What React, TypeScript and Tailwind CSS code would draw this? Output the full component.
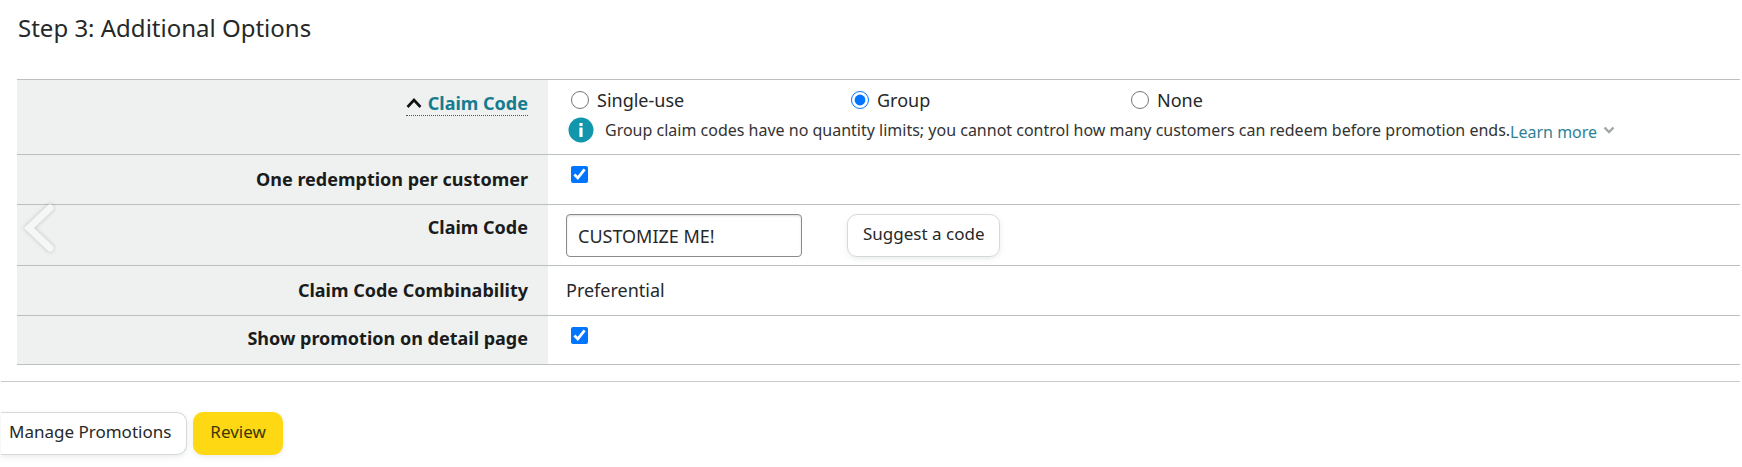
import { useState, type ReactNode } from 'react'

const claimTypes = ['Single-use', 'Group', 'None']

type RowProps = {
  label: ReactNode
  labelClass?: string
  children: ReactNode
  className?: string
}

const Row = ({ label, labelClass = 'pt-2.5', children, className = '' }: RowProps) => (
  <tr className="border-y border-[#bbbfbf]">
    <th
      scope="row"
      className={`w-[531px] bg-[#eff1f1] pr-5 text-right align-top text-lg leading-6 font-bold text-[#1a1c1c] ${labelClass}`}
    >
      {label}
    </th>
    <td className={`pl-[18px] align-top ${className}`}>{children}</td>
  </tr>
)

const Checkbox = ({ id }: { id: string }) => (
  <input
    id={id}
    type="checkbox"
    defaultChecked
    className="ml-[5px] block h-[17px] w-[17px] accent-[#0075ff]"
  />
)

const InfoIcon = () => (
  <svg viewBox="0 0 26 26" className="h-[26px] w-[26px] shrink-0" aria-hidden="true">
    <circle cx="13" cy="13" r="12.5" fill="#1196ab" />
    <rect x="11.4" y="6" width="3.2" height="3" fill="#fff" />
    <rect x="11.4" y="10.5" width="3.2" height="9.5" fill="#fff" />
  </svg>
)

export default function App() {
  const [claimType, setClaimType] = useState('Group')
  const [code, setCode] = useState('CUSTOMIZE ME!')

  return (
    <main className="bg-white pr-0.5 font-['Noto_Sans',sans-serif] text-lg text-[#262829]">
      <h1 className="pt-3 pl-[18px] text-2xl leading-8">Step 3: Additional Options</h1>

      <div className="relative mt-[35px] pl-[17px]">
        <table className="w-full border-collapse">
          <tbody>
            <Row
              className="h-[75px] pt-2"
              label={
                <a
                  href="#claim-code"
                  className="inline-flex items-center gap-1.5 border-b border-dotted border-[#565959] text-[#157c8f]"
                >
                  <svg viewBox="0 0 16 12" className="h-3 w-4" aria-hidden="true">
                    <path d="M1.5 10 8 3l6.5 7" fill="none" stroke="#0f1111" strokeWidth="2.6" />
                  </svg>
                  Claim Code
                </a>
              }
            >
              <div className="flex leading-6">
                {claimTypes.map((type) => (
                  <label key={type} className="flex w-[280px] items-center gap-2 pl-[5px]">
                    <input
                      type="radio"
                      name="claim-type"
                      className="h-[18px] w-[18px] accent-[#0075ff]"
                      checked={claimType === type}
                      onChange={() => setClaimType(type)}
                    />
                    {type}
                  </label>
                ))}
              </div>
              <div className="mt-1 flex items-center pl-0.5 text-base leading-6 whitespace-nowrap">
                <InfoIcon />
                <span className="ml-[11px] text-[#333]">
                  Group claim codes have no quantity limits; you cannot control how many customers can
                  redeem before promotion ends.
                </span>
                <a href="#learn-more" className="flex items-center gap-1.5 pt-1 text-[#2f8294]">
                  Learn more
                  <svg viewBox="0 0 12 8" className="mb-1 h-2 w-3" aria-hidden="true">
                    <path d="M1.5 1.5 6 6l4.5-4.5" fill="none" stroke="#a2a6a6" strokeWidth="2.4" />
                  </svg>
                </a>
              </div>
            </Row>
            <Row
              labelClass="pt-3"
              className="h-[50px] pt-[11px]"
              label={<label htmlFor="one-redemption">One redemption per customer</label>}
            >
              <Checkbox id="one-redemption" />
            </Row>
            <Row className="h-[61px] pt-[9px]" label={<label htmlFor="code">Claim Code</label>}>
              <div className="flex gap-[45px]">
                <input
                  id="code"
                  className="h-[43px] w-[236px] rounded border border-[#888c8c] px-[11px] shadow-[inset_0_1px_2px_rgba(15,17,17,0.15)] outline-none"
                  value={code}
                  onChange={(event) => setCode(event.target.value)}
                />
                <button
                  type="button"
                  className="h-[43px] rounded-[10px] border border-[#d5d9d9] px-[15px] pb-0.5 text-[17px] shadow-[0_2px_5px_rgba(213,217,217,0.5)]"
                >
                  Suggest a code
                </button>
              </div>
            </Row>
            <Row
              labelClass="pt-3"
              className="h-[50px] pt-3 leading-6"
              label="Claim Code Combinability"
            >
              Preferential
            </Row>
            <Row
              className="h-[49px] pt-[11px]"
              label={<label htmlFor="show-promotion">Show promotion on detail page</label>}
            >
              <Checkbox id="show-promotion" />
            </Row>
          </tbody>
        </table>

        <button type="button" aria-label="Previous" className="absolute top-[124px] left-[22px]">
          <svg viewBox="0 0 34 50" className="h-[50px] w-[34px] drop-shadow-[0_0_2px_rgba(0,0,0,0.2)]">
            <path
              d="M28 5 7 25l21 20"
              fill="none"
              stroke="#f5f6f6"
              strokeWidth="7"
              strokeLinecap="round"
            />
          </svg>
        </button>
      </div>

      <hr className="mt-4 ml-px border-[#c8caca]" />

      <div className="mt-[30px] ml-px flex gap-1.5 pb-3 text-[17px]">
        <button
          type="button"
          className="h-[43px] rounded-r-[10px] border border-l-0 border-[#d5d9d9] pr-[15px] pb-0.5 pl-2 shadow-[0_2px_5px_rgba(213,217,217,0.5)]"
        >
          Manage Promotions
        </button>
        <button
          type="button"
          className="h-[43px] rounded-[10px] bg-[#ffd814] px-[17px] pb-0.5 text-[#3b3705] shadow-[0_2px_5px_rgba(213,217,217,0.5)]"
        >
          Review
        </button>
      </div>
    </main>
  )
}
